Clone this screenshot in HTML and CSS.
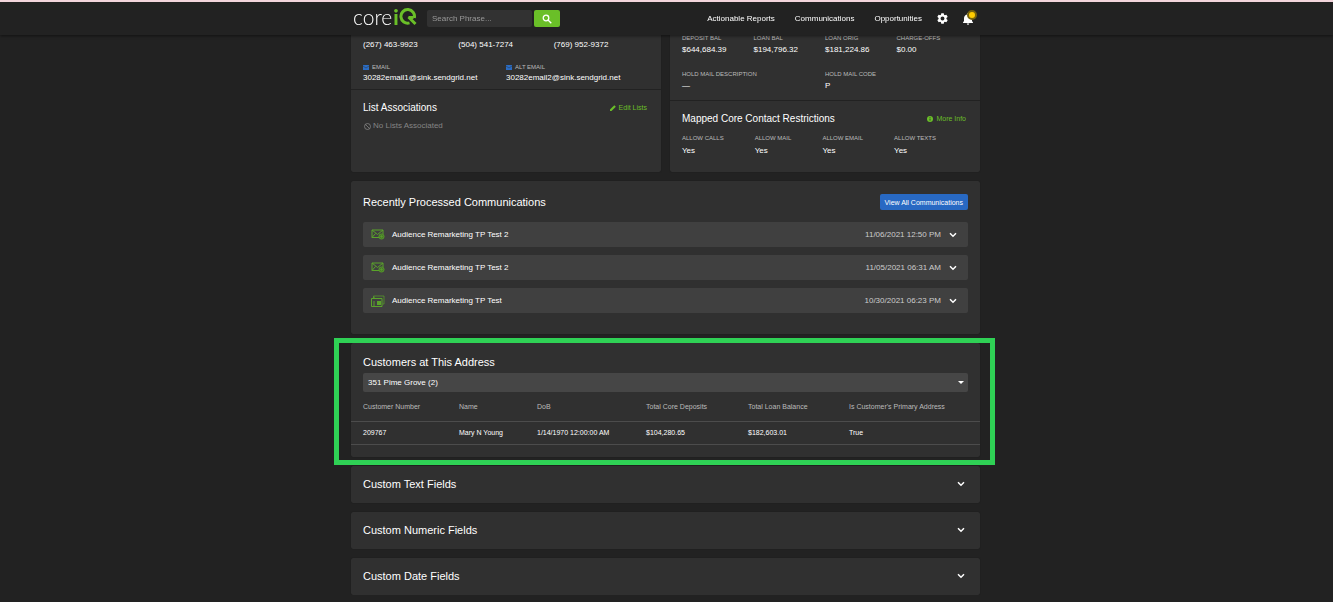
FILE: index.html
```
<!DOCTYPE html>
<html lang="en">
<head>
<meta charset="UTF-8">
<meta name="viewport" content="width=device-width, initial-scale=1.0">
<title>Core iQ</title>
<link rel="stylesheet" href="styles.css">
</head>
<body>
  <svg class="defs" width="0" height="0" aria-hidden="true">
    <symbol id="chevron" viewBox="0 0 8 6"><path d="M1 1.3 4 4.3 7 1.3" fill="none" stroke="currentColor" stroke-width="1.5"/></symbol>
    <symbol id="mail" viewBox="0 0 14 11">
      <path d="M8 8.500H1V1h11v4M1 1l5.500 4.500L12 1M1 8.500l3.500-4" fill="none" stroke="currentColor"/>
      <circle cx="10.500" cy="7.500" r="2.600" fill="#47772a" stroke="currentColor" stroke-width=".8"/>
      <path d="M9 7.500h3M10.500 6v3" stroke="currentColor" stroke-width=".6"/>
    </symbol>
    <symbol id="cards" viewBox="0 0 14 12">
      <path d="M2.500 3V1H13v8h-1.500" fill="none" stroke="currentColor" opacity=".7"/>
      <path d="M.5 3.500h10.500v8H.5zM3 3.500v-2M3 11V6" fill="none" stroke="currentColor"/>
      <path d="M6 6h4v4H6z" fill="currentColor"/>
    </symbol>
    <symbol id="envelope" viewBox="0 0 6 5"><path d="M0 0h6v5H0z" fill="currentColor"/><path d="M0 1l3 2 3-2" fill="none" stroke="#303030" stroke-width=".5"/></symbol>
  </svg>

  <header class="topbar">
    <div class="topbar-inner">
      <a class="logo" href="#" aria-label="core iQ">
        <span class="logo-core">core</span><span class="logo-i">i</span>
        <svg width="18" height="18" viewBox="0 0 18 18" fill="none" stroke="#6abf28" stroke-width="3">
          <path d="M10.500 14.900A6.800 6.800 0 1 1 15.300 10"/>
          <path d="M9.500 9l7 7M9.500 9.500h5"/>
        </svg>
      </a>
      <form class="search">
        <input type="text" placeholder="Search Phrase..." aria-label="Search phrase">
        <button type="button" aria-label="Search">
          <svg width="10" height="10" viewBox="0 0 10 10" fill="none" stroke="#fff" stroke-width="1.300"><circle cx="4" cy="4" r="2.800"/><path d="M6 6l3.300 3.300"/></svg>
        </button>
      </form>
      <nav class="nav">
        <div class="nav-links">
          <a href="#">Actionable Reports</a>
          <a href="#">Communications</a>
          <a href="#">Opportunities</a>
        </div>
        <button type="button" class="icon-button" aria-label="Settings">
          <svg width="11" height="11" viewBox="2 2 20 20" fill="#fff"><path d="M19.140 12.940c.04-.3.060-.61.060-.94s-.02-.64-.07-.94l2.030-1.580a.5.5 0 0 0 .12-.61l-1.920-3.320a.5.5 0 0 0-.59-.22l-2.390.96a7 7 0 0 0-1.620-.94l-.36-2.540a.5.500 0 0 0-.48-.41h-3.840a.5.500 0 0 0-.47.41l-.36 2.540a7.300 7.300 0 0 0-1.620.94l-2.390-.96a.5.500 0 0 0-.59.22L2.740 8.870a.5.500 0 0 0 .12.610l2.030 1.580a6 6 0 0 0 0 1.880l-2.030 1.580a.5.500 0 0 0-.12.610l1.920 3.320c.12.220.37.290.59.220l2.390-.96c.5.380 1.030.7 1.620.94l.36 2.540c.05.240.24.410.48.410h3.840c.24 0 .44-.17.470-.41l.36-2.540a7.300 7.300 0 0 0 1.620-.94l2.390.96c.22.080.47 0 .59-.22l1.920-3.320a.5.500 0 0 0-.12-.61zM12 15.600a3.600 3.600 0 1 1 0-7.200 3.600 3.600 0 0 1 0 7.200z"/></svg>
        </button>
        <button type="button" class="icon-button bell" aria-label="Notifications">
          <svg width="11" height="12" viewBox="0 0 11 12" fill="#fff"><path d="M5 0a1 1 0 0 1 1 1v.5c2 .5 3 2 3 4V8l1 1.500v.5H0v-.5L1 8V5.500c0-2 1-3.500 3-4V1a1 1 0 0 1 1-1zM3.800 10.500h2.400a1.200 1.200 0 0 1-2.400 0z"/></svg>
          <span class="badge"></span>
        </button>
      </nav>
    </div>
  </header>

  <main class="page">
    <div class="top-cards">
      <section class="card contact">
        <div class="section contact-info">
          <div class="phones">
            <span>(267) 463-9923</span>
            <span>(504) 541-7274</span>
            <span>(769) 952-9372</span>
          </div>
          <dl class="two-col">
            <div>
              <dt><svg width="6" height="5"><use href="#envelope"/></svg>Email</dt>
              <dd>30282email1@sink.sendgrid.net</dd>
            </div>
            <div>
              <dt><svg width="6" height="5"><use href="#envelope"/></svg>Alt Email</dt>
              <dd>30282email2@sink.sendgrid.net</dd>
            </div>
          </dl>
        </div>
        <div class="section">
          <div class="section-head">
            <h3>List Associations</h3>
            <a href="#"><svg width="6" height="6" viewBox="0 0 6 6"><path d="M0 6V4.500L4.300.2l1.500 1.500L1.500 6z" fill="currentColor"/></svg>Edit Lists</a>
          </div>
          <p class="empty"><svg width="7" height="7" viewBox="0 0 7 7" fill="none" stroke="currentColor" stroke-width=".8"><circle cx="3.500" cy="3.500" r="3"/><path d="M1.400 1.400l4.200 4.200"/></svg>No Lists Associated</p>
        </div>
      </section>

      <section class="card accounts">
        <div class="section balances">
          <dl class="four-col">
            <div><dt>Deposit Bal</dt><dd>$644,684.39</dd></div>
            <div><dt>Loan Bal</dt><dd>$194,796.32</dd></div>
            <div><dt>Loan Orig</dt><dd>$181,224.86</dd></div>
            <div><dt>Charge-offs</dt><dd>$0.00</dd></div>
          </dl>
          <dl class="two-col">
            <div><dt>Hold Mail Description</dt><dd>—</dd></div>
            <div><dt>Hold Mail Code</dt><dd>P</dd></div>
          </dl>
        </div>
        <div class="section">
          <div class="section-head">
            <h3>Mapped Core Contact Restrictions</h3>
            <a href="#"><svg width="6" height="6" viewBox="0 0 6 6"><circle cx="3" cy="3" r="3" fill="currentColor"/><path d="M3 2.600v2M3 1.200v.8" stroke="#303030" stroke-width=".9"/></svg>More Info</a>
          </div>
          <dl class="restrictions">
            <div><dt>Allow Calls</dt><dd>Yes</dd></div>
            <div><dt>Allow Mail</dt><dd>Yes</dd></div>
            <div><dt>Allow Email</dt><dd>Yes</dd></div>
            <div><dt>Allow Texts</dt><dd>Yes</dd></div>
          </dl>
        </div>
      </section>
    </div>

    <section class="card communications">
      <div class="card-head">
        <h2>Recently Processed Communications</h2>
        <button type="button" class="view-all">View All Communications</button>
      </div>
      <div class="comm-list">
        <button type="button" class="comm">
          <svg class="comm-icon" width="14" height="11"><use href="#mail"/></svg>
          <span class="comm-title">Audience Remarketing TP Test 2</span>
          <span class="comm-date">11/06/2021 12:50 PM</span>
          <svg width="8" height="6"><use href="#chevron"/></svg>
        </button>
        <button type="button" class="comm">
          <svg class="comm-icon" width="14" height="11"><use href="#mail"/></svg>
          <span class="comm-title">Audience Remarketing TP Test 2</span>
          <span class="comm-date">11/05/2021 06:31 AM</span>
          <svg width="8" height="6"><use href="#chevron"/></svg>
        </button>
        <button type="button" class="comm">
          <svg class="comm-icon" width="14" height="12"><use href="#cards"/></svg>
          <span class="comm-title">Audience Remarketing TP Test</span>
          <span class="comm-date">10/30/2021 06:23 PM</span>
          <svg width="8" height="6"><use href="#chevron"/></svg>
        </button>
      </div>
    </section>

    <section class="card customers">
      <h2><label for="address">Customers at This Address</label></h2>
      <select id="address">
        <option>351 Pime Grove (2)</option>
      </select>
      <table>
        <colgroup>
          <col class="col-number"><col class="col-name"><col class="col-dob"><col class="col-deposits"><col class="col-loan"><col>
        </colgroup>
        <thead>
          <tr>
            <th>Customer Number</th>
            <th>Name</th>
            <th>DoB</th>
            <th>Total Core Deposits</th>
            <th>Total Loan Balance</th>
            <th>Is Customer's Primary Address</th>
          </tr>
        </thead>
        <tbody>
          <tr>
            <td>209767</td>
            <td>Mary N Young</td>
            <td>1/14/1970 12:00:00 AM</td>
            <td>$104,280.65</td>
            <td>$182,603.01</td>
            <td>True</td>
          </tr>
        </tbody>
      </table>
    </section>

    <button type="button" class="card fields">Custom Text Fields <svg width="8" height="6"><use href="#chevron"/></svg></button>
    <button type="button" class="card fields">Custom Numeric Fields <svg width="8" height="6"><use href="#chevron"/></svg></button>
    <button type="button" class="card fields">Custom Date Fields <svg width="8" height="6"><use href="#chevron"/></svg></button>
  </main>
</body>
</html>
```
FILE: styles.css
```
* {
  box-sizing: border-box;
}
body {
  margin: 0;
  padding-right: 2px;
  background-color: #222;
  color: #fff;
  font-family: "Liberation Sans", Arial, sans-serif;
  font-size: 8px;
  line-height: 12px;
}
h2, h3, p, dl, dd {
  margin: 0;
}
h2 {
  font-size: 11px;
  font-weight: normal;
  line-height: 16px;
}
h3 {
  font-size: 10px;
  font-weight: normal;
  line-height: 14px;
}
button, input, select {
  font-family: inherit;
  font-size: inherit;
  color: inherit;
  border: 0;
  margin: 0;
}
button {
  cursor: pointer;
}
a {
  color: inherit;
  text-decoration: none;
}
svg {
  flex: none;
  display: block;
}
.defs {
  position: absolute;
}

/* header */
.topbar {
  position: fixed;
  top: 0;
  left: 0;
  right: 0;
  z-index: 10;
  padding-right: 2px;
  background-color: #222;
  border-top: 2px solid #f3d5dc;
  box-shadow: 0 1px 3px rgba(0, 0, 0, 0.5);
}
.topbar-inner {
  display: flex;
  align-items: center;
  max-width: 629px;
  height: 33px;
  margin: 0 auto;
  padding: 0 6px 0 2px;
}
.logo {
  display: flex;
  align-items: center;
  width: 63px;
  margin-right: 11px;
  padding-bottom: 3px;
  font-family: Lato, sans-serif;
  font-size: 21px;
  line-height: 22px;
}
.logo-core {
  font-weight: 300;
}
.logo-i {
  margin-left: 1px;
  color: #6abf28;
  font-weight: 900;
}
.search {
  display: flex;
  gap: 2px;
}
.search input {
  width: 105px;
  height: 17px;
  padding: 0 5px;
  border-radius: 2px;
  background-color: #323232;
}
.search input::placeholder {
  color: #999;
}
.search button {
  display: flex;
  align-items: center;
  justify-content: center;
  width: 26px;
  height: 17px;
  padding: 0;
  border-radius: 2px;
  background-color: #6abf28;
}
.nav {
  display: flex;
  align-items: center;
  gap: 15px;
  margin-left: auto;
}
.nav-links {
  display: flex;
  gap: 20px;
}
.icon-button {
  display: block;
  padding: 0;
  background: none;
}
.bell {
  position: relative;
}
.badge {
  position: absolute;
  top: -3px;
  right: -3px;
  width: 10px;
  height: 10px;
  border: 2px solid #75620d;
  border-radius: 50%;
  background-color: #ffcc00;
}

/* cards */
.page {
  display: flex;
  flex-direction: column;
  gap: 9px;
  max-width: 629px;
  margin: 0 auto;
}
.card {
  border-radius: 2px;
  background-color: #303030;
  box-shadow: 0 0 1px rgba(0, 0, 0, 0.5);
}
.top-cards {
  display: grid;
  grid-template-columns: 1fr 1fr;
  gap: 9px;
}
.section {
  padding: 11px 12px 15px;
}
.section + .section {
  border-top: 1px solid #222;
}
.section-head {
  display: flex;
  align-items: center;
  justify-content: space-between;
  padding-right: 2px;
}
.section-head a {
  display: flex;
  align-items: center;
  gap: 3px;
  color: #6abf28;
  font-size: 7px;
}
dt {
  display: flex;
  align-items: center;
  gap: 3px;
  color: #bbb;
  font-size: 6px;
  line-height: 8px;
  text-transform: uppercase;
}
dt svg {
  color: #2a6cc4;
}
dd {
  margin-top: 2px;
}
.section.contact-info {
  padding: 39px 12px 5px;
}
.contact-info dd {
  margin-top: 1px;
}
.phones {
  display: grid;
  grid-template-columns: repeat(3, 1fr);
  margin-bottom: 12px;
}
.two-col {
  display: grid;
  grid-template-columns: 1fr 1fr;
}
.four-col {
  display: grid;
  grid-template-columns: repeat(4, 1fr);
  margin-bottom: 14px;
}
.section.balances {
  padding: 34px 12px 8px;
}
.restrictions {
  display: flex;
  gap: 31px;
  margin-top: 8px;
}
.restrictions dd {
  margin-top: 3px;
}
.empty {
  display: flex;
  align-items: center;
  gap: 2px;
  margin-top: 5px;
  padding-left: 1px;
  color: #858585;
}

/* communications */
.communications {
  padding: 13px 12px 21px;
}
.card-head {
  display: flex;
  align-items: center;
  justify-content: space-between;
  margin-bottom: 12px;
}
.view-all {
  height: 16px;
  padding: 0 5px;
  border-radius: 2px;
  background-color: #2869c3;
  font-size: 7px;
}
.comm-list {
  display: flex;
  flex-direction: column;
  gap: 8px;
}
.comm {
  display: flex;
  align-items: center;
  height: 25px;
  padding: 0 11px 0 8px;
  border-radius: 2px;
  background-color: #404040;
  text-align: left;
}
.comm-icon {
  margin-right: 7px;
  color: #5aa42a;
}
.comm-title {
  flex: 1;
}
.comm-date {
  margin-right: 8px;
  color: #ccc;
}

/* customers at address */
.customers {
  position: relative;
  padding: 11px 0 12px;
}
.customers::after {
  content: "";
  position: absolute;
  inset: -5px -15px -8px -17px;
  border: 5px solid #2fd155;
  pointer-events: none;
}
.customers h2 {
  padding: 0 12px;
}
.customers select {
  appearance: none;
  display: block;
  width: calc(100% - 24px);
  height: 19px;
  margin: 3px 12px 0;
  padding: 0 5px;
  border-radius: 2px;
  background: #464646 url("data:image/svg+xml,%3Csvg xmlns='http://www.w3.org/2000/svg' width='6' height='3'%3E%3Cpath d='M0 0h6L3 3z' fill='white'/%3E%3C/svg%3E") no-repeat right 4px center;
}
table {
  width: 100%;
  border-collapse: collapse;
  table-layout: fixed;
  font-size: 7px;
}
.col-number { width: 108px; }
.col-name { width: 78px; }
.col-dob { width: 109px; }
.col-deposits { width: 102px; }
.col-loan { width: 101px; }
th, td {
  padding: 0;
  border-bottom: 1px solid #4c4c4c;
  text-align: left;
  font-weight: normal;
  white-space: nowrap;
}
th:first-child, td:first-child {
  padding-left: 12px;
}
th {
  height: 29px;
  padding-top: 2px;
  color: #bbb;
}
td {
  height: 23px;
}

/* collapsed field groups */
.fields {
  display: flex;
  align-items: center;
  justify-content: space-between;
  height: 37px;
  padding: 0 15px 0 12px;
  font-size: 11px;
}
```
